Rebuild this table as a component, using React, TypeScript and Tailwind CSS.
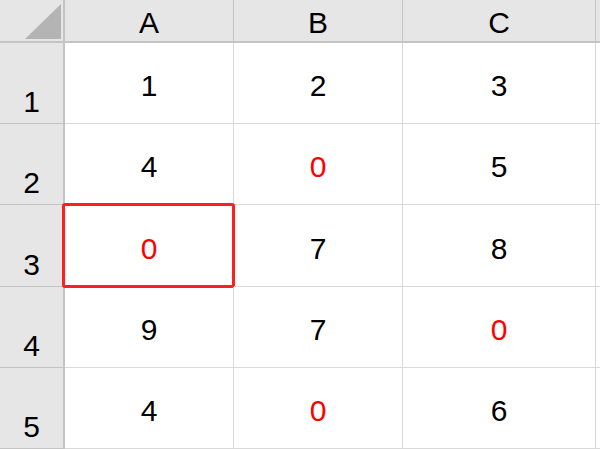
import React from "react";

const rows: (number | string)[][] = [
  [1, 2, 3],
  [4, 0, 5],
  [0, 7, 8],
  [9, 7, 0],
  [4, 0, 6],
];

const cols = ["A", "B", "C"];

const App = () => {
  return (
    <div
      className="h-[449px] w-[600px] overflow-hidden bg-white"
      style={{ fontFamily: '"Liberation Sans", "Noto Sans", sans-serif' }}
    >
      <div className="grid grid-cols-[65px_169px_169px_193px_4px] grid-rows-[43px_81px_81px_82px_81px_81px]">
        {/* corner */}
        <div className="flex items-end justify-end border-b-2 border-r-2 border-[#c4c4c4] bg-[#e6e6e6] pb-[2px] pr-[2px]">
          <svg width="36" height="35" viewBox="0 0 36 35">
            <polygon points="36,0 36,35 0,35" fill="#b4b4b4" />
          </svg>
        </div>
        {cols.map((c) => (
          <div
            key={c}
            className="flex items-end justify-center border-b-2 border-r border-[#c4c4c4] bg-[#e6e6e6] pb-[3px] text-[30px] leading-none text-black"
          >
            {c}
          </div>
        ))}
        <div className="border-b-2 border-[#c4c4c4] bg-[#e6e6e6]" />

        {rows.map((row, ri) => (
          <React.Fragment key={ri}>
            <div className="flex items-end justify-center border-b border-r-2 border-[#c4c4c4] bg-[#e6e6e6] pb-[6px] text-[30px] leading-none text-black">
              {ri + 1}
            </div>
            {row.map((v, ci) => (
              <div
                key={ci}
                className={`relative flex items-center justify-center border-b border-r border-[#d9d9d9] pt-[6px] text-[30px] leading-none ${
                  v === 0 ? "text-[#ff0000]" : "text-black"
                }`}
              >
                {v}
                {ri === 2 && ci === 0 && (
                  <div className="absolute -bottom-[2px] -left-[3px] -right-[2px] -top-[2px] rounded-[3px] border-[3px] border-[#ff1f1f]" />
                )}
              </div>
            ))}
            <div className="border-b border-[#d9d9d9]" />
          </React.Fragment>
        ))}
      </div>
    </div>
  );
};

export default App;
